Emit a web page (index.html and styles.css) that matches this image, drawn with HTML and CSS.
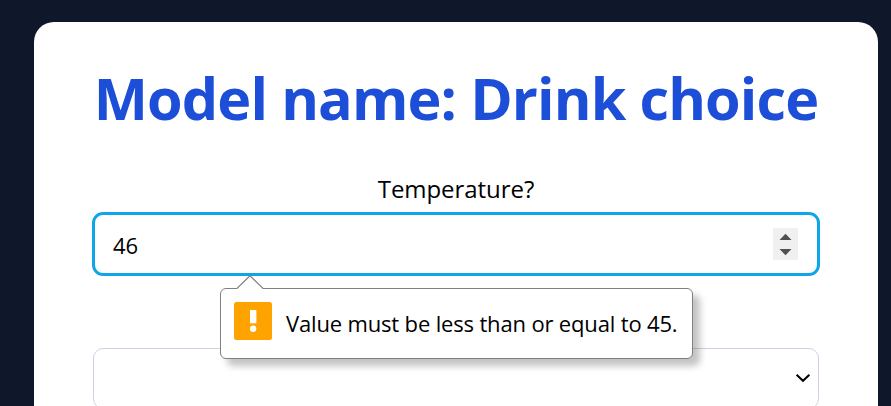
FILE: index.html
```html
<!DOCTYPE html>
<html lang="en">
<head>
<meta charset="utf-8">
<title>Drink choice</title>
<link rel="stylesheet" href="styles.css">
</head>
<body>
<main class="card">
  <h1 class="title">Model name: Drink choice</h1>
  <form class="form">
    <div class="label">Temperature?</div>
    <div class="field number-field">
      <span class="value">46</span>
      <svg class="spinner" width="25" height="32" viewBox="0 0 25 32"><path fill="#505050" d="M6.5 12 12.5 5.7 18.5 12zM6.5 21h12l-6 6.3z"/></svg>
      <div class="tooltip" role="alert">
        <svg class="arrow" width="28" height="14" viewBox="0 0 28 14"><path fill="#fff" d="M1 14 14 1l13 13z"/><path fill="none" stroke="#808080" stroke-width="1.3" d="M1 13.4 14 .8l13 12.6"/></svg>
        <svg class="warning" width="38" height="38" viewBox="0 0 38 38"><rect width="38" height="38" rx="2.5" fill="#ffa300"/><path fill="#fff" d="M16 8h6.4v13.3H16z"/><circle cx="19.2" cy="26.7" r="3.2" fill="#fff"/></svg>
        <span class="message">Value must be less than or equal to 45.</span>
      </div>
    </div>
    <div class="field select-field">
      <svg width="16" height="10" viewBox="0 0 16 10"><path fill="none" stroke="#000" stroke-width="2" d="m1.6 1.8 6.4 6 6.4-6"/></svg>
    </div>
  </form>
</main>
</body>
</html>
```
FILE: styles.css
```css
* { box-sizing: border-box; }
body {
  margin: 0;
  height: 406px;
  overflow: hidden;
  padding: 22px 13px 0 34px;
  background: #0f172a;
  color: #000;
  font-family: "Open Sans", "Noto Sans", sans-serif;
}
svg { display: block; flex: none; }
.card {
  height: 384px;
  overflow: hidden;
  padding: 36px 58px 0;
  border-radius: 20px 20px 0 0;
  background: #fff;
}
.title {
  margin: 0;
  height: 80px;
  color: #1d4ed8;
  font-size: 57.5px;
  font-weight: 700;
  letter-spacing: -.88px;
  line-height: 81px;
  text-align: center;
  white-space: nowrap;
}
.form { display: flex; flex-direction: column; }
.label {
  height: 74px;
  padding-top: 34px;
  font-size: 24px;
  letter-spacing: -.05px;
  line-height: 34px;
  text-align: center;
}
.field { display: flex; align-items: center; }
.number-field {
  position: relative;
  height: 64px;
  padding: 0 19px 0 18px;
  justify-content: space-between;
  border: 3px solid #0ea5e9;
  border-radius: 11px;
}
.value { padding-top: 2px; font-size: 22px; line-height: 30px; }
.spinner { background: #f0f0f0; }
.select-field {
  height: 61px;
  margin: 72px 1px 0;
  padding: 0 7px;
  justify-content: flex-end;
  border: 1px solid #cbd5e1;
  border-radius: 10px;
}
.select-field svg { margin-bottom: 1px; }
.tooltip {
  position: absolute;
  z-index: 1;
  left: 125px;
  top: 73px;
  width: 473px;
  height: 71px;
  display: flex;
  align-items: center;
  gap: 14px;
  padding: 0 0 5px 13px;
  border: 1px solid #808080;
  border-radius: 6px;
  background: #fff;
  box-shadow: 7px 7px 7px rgba(0, 0, 0, .24);
}
.arrow { position: absolute; left: 15px; top: -14px; }
.message {
  padding-top: 4px;
  font-size: 22px;
  letter-spacing: -.16px;
  line-height: 30px;
  white-space: nowrap;
}
```
